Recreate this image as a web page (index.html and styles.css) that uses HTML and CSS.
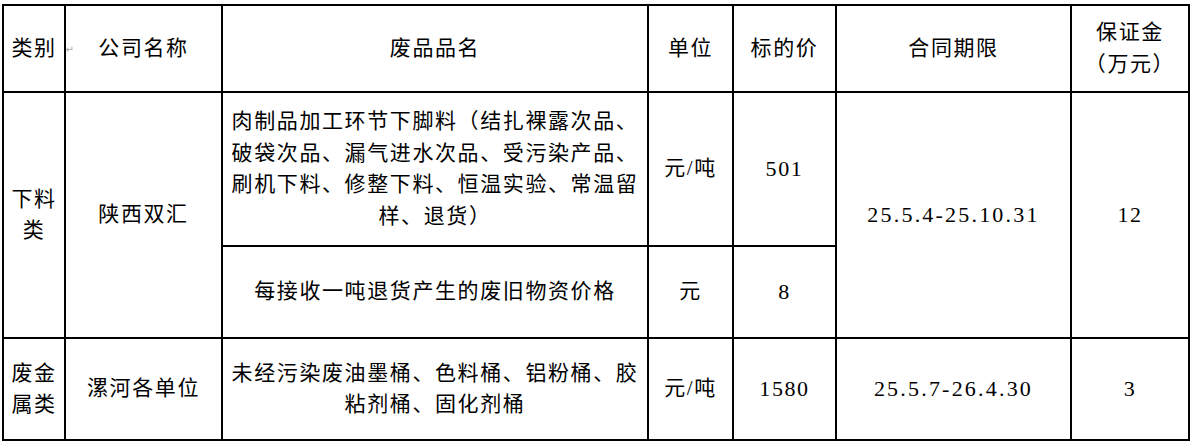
FILE: index.html
```html
<!DOCTYPE html>
<html lang="zh-CN">
<head>
<meta charset="utf-8">
<title>废品处置</title>
<link rel="stylesheet" href="styles.css">
</head>
<body>
<table class="sheet">
  <colgroup>
    <col class="c-cat">
    <col class="c-co">
    <col class="c-name">
    <col class="c-unit">
    <col class="c-price">
    <col class="c-term">
    <col class="c-dep">
  </colgroup>
  <tr class="r-head">
    <td class="cat">类别<span class="pmark">↵</span></td>
    <td>公司名称</td>
    <td>废品品名</td>
    <td>单位</td>
    <td>标的价</td>
    <td>合同期限</td>
    <td>保证金<br>（万元）</td>
  </tr>
  <tr class="r-a">
    <td class="cat" rowspan="2">下料类</td>
    <td rowspan="2">陕西双汇</td>
    <td class="name">肉制品加工环节下脚料（结扎裸露次品、<br>破袋次品、漏气进水次品、受污染产品、<br>刷机下料、修整下料、恒温实验、常温留<br>样、退货）</td>
    <td>元/吨</td>
    <td class="num">501</td>
    <td class="date" rowspan="2">25.5.4-25.10.31</td>
    <td class="num" rowspan="2">12</td>
  </tr>
  <tr class="r-b">
    <td class="name">每接收一吨退货产生的废旧物资价格</td>
    <td>元</td>
    <td class="num">8</td>
  </tr>
  <tr class="r-c">
    <td class="cat">废金属类</td>
    <td>漯河各单位</td>
    <td class="name">未经污染废油墨桶、色料桶、铝粉桶、胶<br>粘剂桶、固化剂桶</td>
    <td>元/吨</td>
    <td class="num">1580</td>
    <td class="date">25.5.7-26.4.30</td>
    <td class="num">3</td>
  </tr>
</table>
</body>
</html>
```
FILE: styles.css
```css
html, body {
  margin: 0;
  background: #ffffff;
}
body {
  padding: 4px 0 0 2px;
  font-family: "Liberation Serif", "Noto Sans CJK SC", serif;
  color: #000000;
}
.sheet {
  border-collapse: collapse;
  table-layout: fixed;
  width: 1188px;
  font-size: 21px;
  letter-spacing: 1.6px;
  line-height: 31.5px;
}
.c-cat { width: 62px; }
.c-co { width: 157px; }
.c-name { width: 426px; }
.c-unit { width: 85px; }
.c-price { width: 103px; }
.c-term { width: 235px; }
.c-dep { width: 118px; }

.sheet td {
  border: 2px solid #000000;
  padding: 0;
  text-align: center;
  vertical-align: middle;
}
.sheet td.cat {
  padding: 0 4px;
}
.sheet td.name {
  white-space: nowrap;
}
.sheet td.num {
  font-size: 22px;
}
.sheet td.date {
  font-size: 22px;
  letter-spacing: 2.2px;
}
.r-head { height: 87px; }
.r-a { height: 154px; }
.r-b { height: 92px; }
.r-c { height: 102px; }

.pmark {
  display: inline-block;
  width: 0;
  text-indent: 9px;
  font-family: "DejaVu Sans", sans-serif;
  font-size: 10px;
  color: #a8a8a8;
  letter-spacing: 0;
  line-height: 10px;
  vertical-align: 2px;
}
```
